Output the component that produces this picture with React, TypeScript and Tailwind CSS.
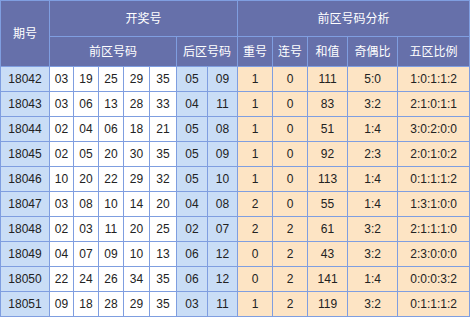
const rows: [string, string[], string[], string[]][] = [
  ["18042", ["03", "19", "25", "29", "35"], ["05", "09"], ["1", "0", "111", "5:0", "1:0:1:1:2"]],
  ["18043", ["03", "06", "13", "28", "33"], ["04", "11"], ["1", "0", "83", "3:2", "2:1:0:1:1"]],
  ["18044", ["02", "04", "06", "18", "21"], ["05", "08"], ["1", "0", "51", "1:4", "3:0:2:0:0"]],
  ["18045", ["02", "05", "20", "30", "35"], ["05", "09"], ["1", "0", "92", "2:3", "2:0:1:0:2"]],
  ["18046", ["10", "20", "22", "29", "32"], ["05", "10"], ["1", "0", "113", "1:4", "0:1:1:1:2"]],
  ["18047", ["03", "08", "10", "14", "20"], ["04", "08"], ["2", "0", "55", "1:4", "1:3:1:0:0"]],
  ["18048", ["02", "03", "11", "20", "25"], ["02", "07"], ["2", "2", "61", "3:2", "2:1:1:1:0"]],
  ["18049", ["04", "07", "09", "10", "13"], ["06", "12"], ["0", "2", "43", "3:2", "2:3:0:0:0"]],
  ["18050", ["22", "24", "26", "34", "35"], ["06", "12"], ["0", "2", "141", "1:4", "0:0:0:3:2"]],
  ["18051", ["09", "18", "28", "29", "35"], ["03", "11"], ["1", "2", "119", "3:2", "0:1:1:1:2"]],
];

const widths = [49, 24, 25, 25, 26, 27, 31, 30, 35, 35, 40, 50, 72];

export default function App() {
  const th = "border border-[#7f9ee0] bg-[#6670aa] text-white font-normal text-[12px] text-center p-0";
  const td = "border border-[#7f9ee0] text-center p-0 text-[12px] text-[#222]";
  return (
    <div className="w-[471px] h-[318px] overflow-hidden bg-white" style={{ fontFamily: '"Liberation Sans", "Noto Sans CJK SC", sans-serif' }}>
      <table className="border-collapse table-fixed w-[470px]">
        <colgroup>
          {widths.map((w, i) => (
            <col key={i} style={{ width: w }} />
          ))}
        </colgroup>
        <thead>
          <tr className="h-[36px]">
            <th rowSpan={2} className={th}>期号</th>
            <th colSpan={7} className={th}>开奖号</th>
            <th colSpan={5} className={th}>前区号码分析</th>
          </tr>
          <tr className="h-[30px]">
            <th colSpan={5} className={th}>前区号码</th>
            <th colSpan={2} className={th}>后区号码</th>
            <th className={th}>重号</th>
            <th className={th}>连号</th>
            <th className={th}>和值</th>
            <th className={th}>奇偶比</th>
            <th className={th}>五区比例</th>
          </tr>
        </thead>
        <tbody>
          {rows.map(([issue, front, back, stats]) => (
            <tr key={issue} className="h-[25px]">
              <td className={`${td} bg-[#c9ddf6]`}>{issue}</td>
              {front.map((n, i) => (
                <td key={i} className={`${td} bg-white`}>{n}</td>
              ))}
              {back.map((n, i) => (
                <td key={i} className={`${td} bg-[#c9ddf6]`}>{n}</td>
              ))}
              {stats.map((s, i) => (
                <td key={i} className={`${td} bg-[#fde4c4]`}>{s}</td>
              ))}
            </tr>
          ))}
        </tbody>
      </table>
    </div>
  );
}
